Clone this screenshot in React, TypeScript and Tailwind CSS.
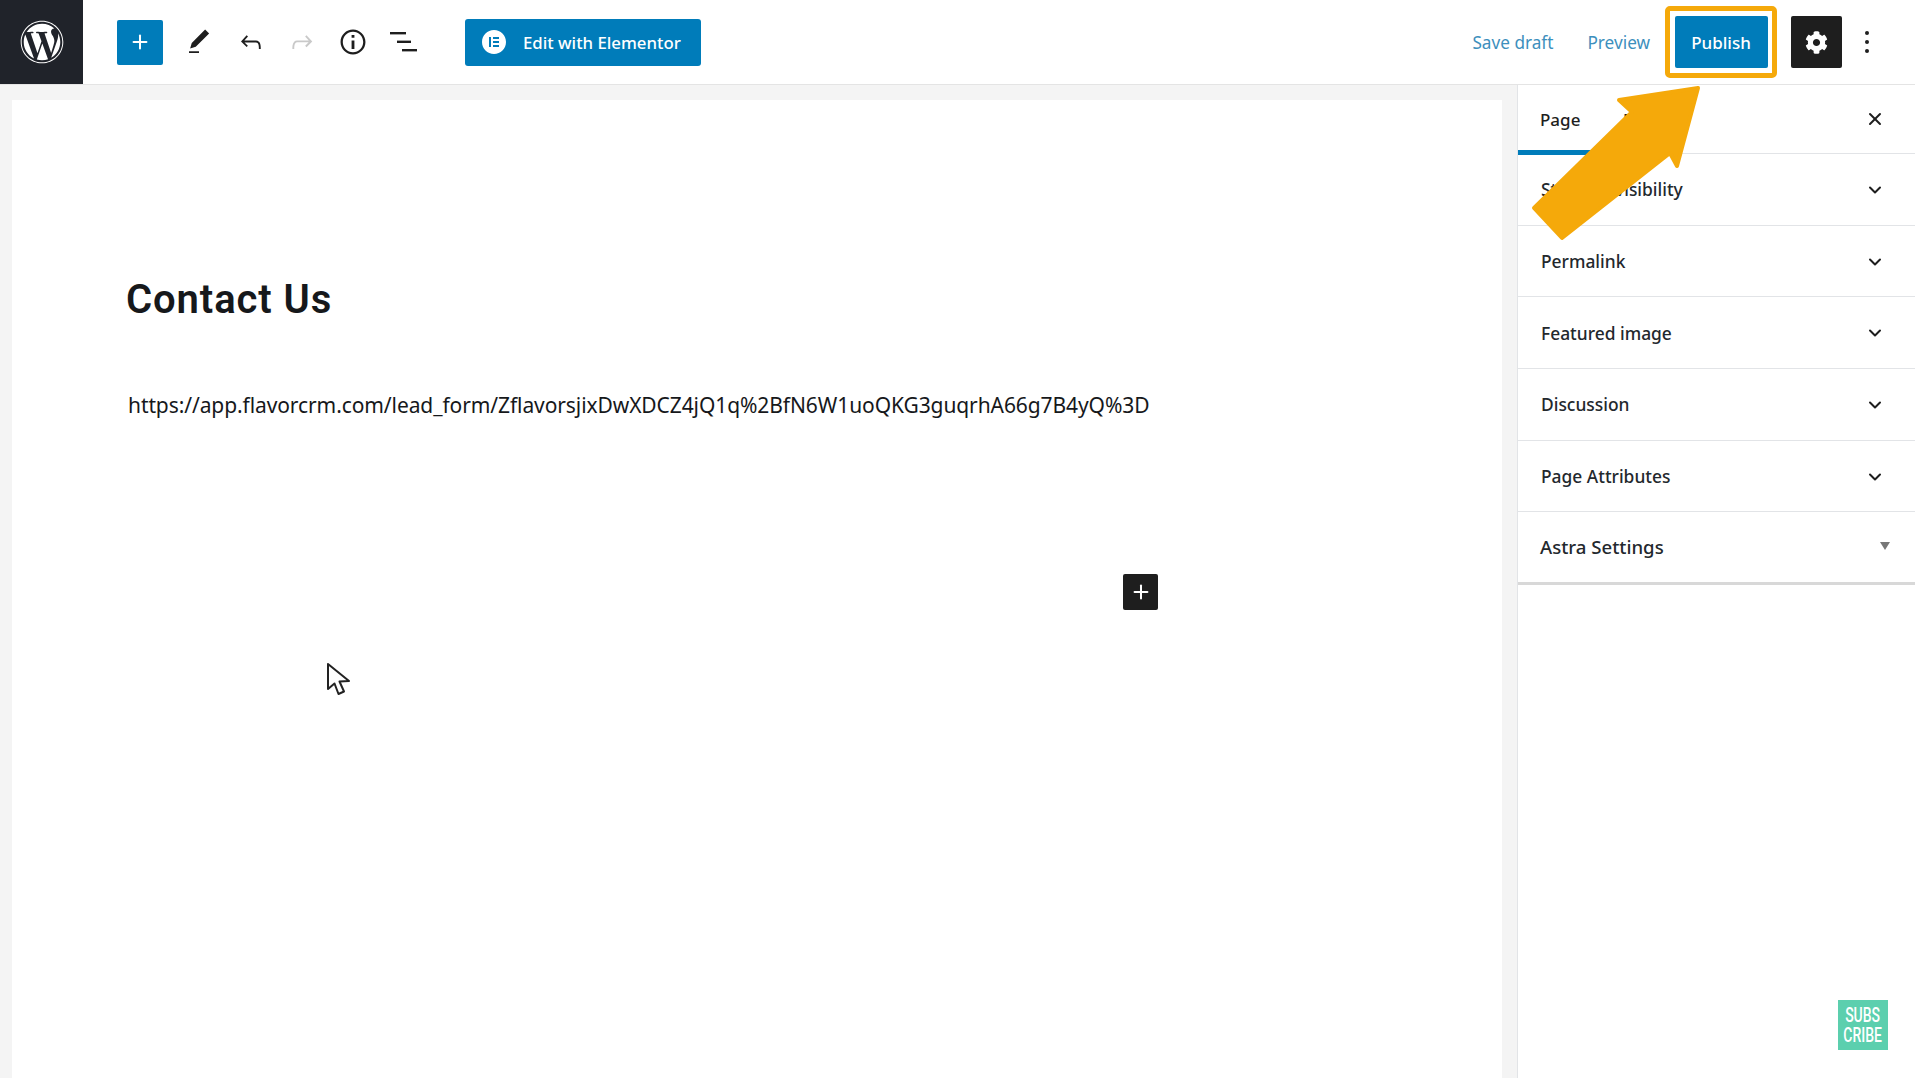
import { ChevronDown, Plus, X } from "lucide-react";
import { FaCog, FaWordpress } from "react-icons/fa";
import { SiElementor } from "react-icons/si";

const PANELS = ["Status & visibility", "Permalink", "Featured image", "Discussion", "Page Attributes"];

function IconPath({ d, className }: { d: string; className: string }) {
  return (
    <svg viewBox="0 0 24 24" className={className} fill="currentColor">
      <path d={d} />
    </svg>
  );
}

export default function App() {
  return (
    <div className="relative flex flex-col w-[1915px] h-[1078px] overflow-hidden bg-white font-['Noto_Sans',sans-serif] text-[#1e1e1e]">
      {/* Top toolbar */}
      <header className="flex items-center h-[85px] shrink-0 border-b border-[#e4e4e4] bg-white">
        <div className="flex items-center justify-center w-[83px] h-[84px] bg-[#20232a] text-white">
          <FaWordpress className="w-11 h-11" />
        </div>
        <button className="flex items-center justify-center w-[46px] h-[45px] ml-[34px] rounded-[2px] bg-[#007cba] text-white">
          <Plus className="w-[22px] h-[22px]" strokeWidth={2.2} />
        </button>
        <IconPath
          className="w-[30px] h-[30px] ml-[21px] text-[#1e1e1e]"
          d="M20.1 5.1L16.9 2 6.2 12.7l-1.3 4.4 4.5-1.3L20.1 5.1zM4 20.8h8v-1.5H4v1.5z"
        />
        <IconPath
          className="w-[30px] h-[30px] ml-[22px] text-[#1e1e1e]"
          d="M18.3 11.7c-.6-.6-1.4-.9-2.3-.9H6.7l2.9-3.3-1.1-1-4.5 5L8.5 16l1-1-2.7-2.7H16c.5 0 .9.2 1.3.5 1 1 1 3.4 1 4.5v.3h1.5v-.2c0-1.5 0-4.3-1.5-5.7z"
        />
        <IconPath
          className="w-[30px] h-[30px] ml-[21px] text-[#c9c9c9]"
          d="M15.6 6.5l-1.1 1 2.9 3.3H8c-.9 0-1.7.3-2.3.9-1.4 1.5-1.4 4.2-1.4 5.6v.2h1.5v-.3c0-1.1 0-3.5 1-4.5.3-.3.7-.5 1.3-.5h9.2L14.5 15l1.1 1.1 4.6-4.6-4.6-5z"
        />
        <IconPath
          className="w-[34px] h-[34px] ml-[19px] text-[#1e1e1e]"
          d="M12 3.2c-4.8 0-8.8 3.9-8.8 8.8 0 4.8 3.9 8.8 8.8 8.8 4.8 0 8.8-3.9 8.8-8.8 0-4.8-4-8.8-8.8-8.8zm0 16c-4 0-7.2-3.3-7.2-7.2C4.8 8 8 4.8 12 4.8s7.2 3.3 7.2 7.2c0 4-3.2 7.2-7.2 7.2zM11 17h2v-6h-2v6zm0-8h2V7h-2v2z"
        />
        <svg viewBox="0 0 28 20" className="w-[28px] h-[20px] ml-[20px] text-[#1e1e1e]" fill="currentColor">
          <rect x="0" y="0" width="16" height="2.4" />
          <rect x="7" y="8.6" width="14" height="2.4" />
          <rect x="12" y="17" width="15" height="2.4" />
        </svg>
        <button className="flex items-center w-[236px] h-[47px] ml-[47px] pl-[17px] rounded-[3px] bg-[#007cba] text-[16.8px] text-white">
          <SiElementor className="w-[24px] h-[24px] text-white" />
          <span className="ml-[17px] pt-px font-medium">Edit with Elementor</span>
        </button>

        <div className="flex items-center ml-auto">
          <span className="pt-px text-[17.2px] text-[#3d8fbd]">Save draft</span>
          <span className="ml-[34px] pt-px text-[17.2px] text-[#3d8fbd]">Preview</span>
          <div className="flex items-center justify-center w-[112px] h-[72px] ml-[15px] border-[5px] border-[#f5a90a] rounded-[5px]">
            <button className="flex items-center justify-center w-[93px] h-[52px] pt-px rounded-[2px] bg-[#007cba] text-[17px] font-medium text-white">
              Publish
            </button>
          </div>
          <button className="flex items-center justify-center w-[51px] h-[52px] ml-[14px] rounded-[2px] bg-[#1e1e1e] text-white">
            <FaCog className="w-[23px] h-[23px]" />
          </button>
          <div className="flex flex-col items-center gap-[5px] w-[6px] ml-[22px] mr-[45px]">
            <span className="w-1 h-1 rounded-full bg-[#1e1e1e]" />
            <span className="w-1 h-1 rounded-full bg-[#1e1e1e]" />
            <span className="w-1 h-1 rounded-full bg-[#1e1e1e]" />
          </div>
        </div>
      </header>

      <div className="flex flex-1 min-h-0">
        {/* Editor canvas */}
        <main className="flex-1 pl-3 pr-[15px] pt-[15px] bg-[#f4f4f4]">
          <div className="h-full pl-[114px] pt-[175px] bg-white">
            <h1 className="font-['Roboto',sans-serif] text-[40px] leading-[50px] font-semibold text-[#16181b] tracking-[0.9px]">
              Contact Us
            </h1>
            <p className="mt-[65px] ml-[2px] text-[21px] leading-[30px] text-[#16181b] tracking-[-0.09px]">
              https://app.flavorcrm.com/lead_form/ZflavorsjixDwXDCZ4jQ1q%2BfN6W1uoQKG3guqrhA66g7B4yQ%3D
            </p>
            <button className="flex items-center justify-center w-[35px] h-[36px] mt-[154px] ml-[997px] rounded-[2px] bg-[#1e1e1e] text-white">
              <Plus className="w-[22px] h-[22px]" strokeWidth={2.2} />
            </button>
          </div>
        </main>

        {/* Settings sidebar */}
        <aside className="w-[398px] shrink-0 border-l border-[#e2e4e7] bg-white">
          <div className="flex items-center h-[69px] border-b border-[#e2e4e7]">
            <div className="relative flex items-center w-[75px] h-[69px] pl-[22px] pt-px text-[17px] font-medium">
              Page
              <span className="absolute left-0 right-0 bottom-[-1px] h-[5px] bg-[#007cba]" />
            </div>
            <span className="ml-[30px] pt-px text-[17px] font-medium">Block</span>
            <X className="w-[20px] h-[20px] ml-auto mr-[30px]" strokeWidth={2.4} />
          </div>
          {PANELS.map((label) => (
            <div key={label} className="flex items-center justify-between h-[71.7px] pl-[23px] pr-[30px] border-b border-[#e2e4e7]">
              <span className="text-[17.4px] font-medium text-[#23282d]">{label}</span>
              <ChevronDown className="w-[20px] h-[20px] mt-px" strokeWidth={2.4} />
            </div>
          ))}
          <div className="flex items-center justify-between h-[73px] pl-[22px] pr-[25px] border-b-[3px] border-[#d8d8d8]">
            <span className="text-[18.6px] font-medium text-[#23282d]">Astra Settings</span>
            <span className="w-0 h-0 -mt-[2px] border-x-[5.5px] border-t-[8px] border-x-transparent border-t-[#777]" />
          </div>
        </aside>
      </div>

      {/* Mouse cursor */}
      <svg viewBox="0 0 26 36" className="absolute left-[326px] top-[662px] w-[26px] h-[36px]" fill="#fff" stroke="#222" strokeWidth="2" strokeLinejoin="round">
        <path d="M2 2 L2 27 L8.5 21.5 L12.5 32 L18 29.5 L13.5 19.5 L23 19 Z" />
      </svg>

      {/* Annotation arrow */}
      <svg viewBox="0 0 1915 1078" className="absolute inset-0 w-[1915px] h-[1078px] pointer-events-none">
        <polygon
          points="1698,88 1619,100 1632,112 1534,208 1562,238 1670,153 1677,166"
          fill="#f5a90a"
          stroke="#f5a90a"
          strokeWidth="4"
          strokeLinejoin="round"
        />
      </svg>

      {/* Subscribe badge */}
      <div className="absolute left-[1838px] top-[1000px] flex items-center justify-center w-[50px] h-[50px] bg-[#5ccfae] font-['Roboto',sans-serif] text-[20px] leading-[20px] font-medium text-white">
        <span className="scale-x-[0.7] text-center">
          SUBS
          <br />
          CRIBE
        </span>
      </div>
    </div>
  );
}
